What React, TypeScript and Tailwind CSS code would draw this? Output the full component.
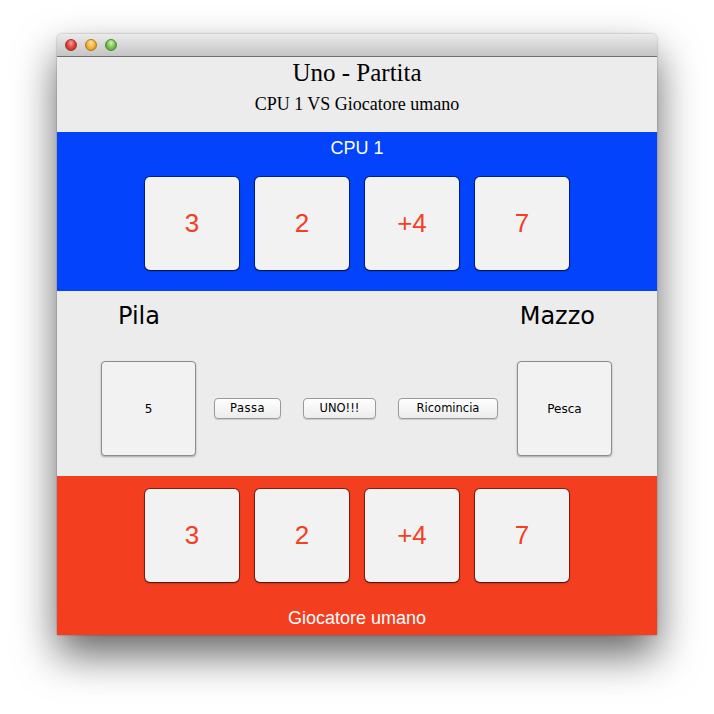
import React from "react";

const cards = ["3", "2", "+4", "7"];

export default function App() {
  return (
    <div className="w-[714px] h-[714px] bg-white pt-[34px] pl-[57px]">
      <div className="w-[600px] h-[601px] flex flex-col rounded-t-[5px] shadow-[0_20px_42px_rgba(0,0,0,0.6),0_0_2px_rgba(0,0,0,0.4)]">
        {/* title bar */}
        <div className="h-[23px] shrink-0 rounded-t-[5px] bg-gradient-to-b from-[#ebebeb] to-[#c4c4c4] border-b border-[#6e6e6e] flex items-center gap-[8px] pl-[8px]">
          <Light color="from-[#ff9a9a] via-[#e0443e] to-[#a8201a]" ring="border-[#a3302c]" />
          <Light color="from-[#ffe6a0] via-[#f5b43a] to-[#c27a0e]" ring="border-[#b07820]" />
          <Light color="from-[#d3f5b0] via-[#7cc356] to-[#3f8a22]" ring="border-[#4b8a30]" />
        </div>

        {/* header */}
        <div className="h-[75px] shrink-0 bg-[#ececec] flex flex-col items-center pt-[1px] font-['Liberation_Serif',serif] text-black">
          <div className="text-[25px] leading-[30px]">Uno - Partita</div>
          <div className="text-[18px] leading-[22px] mt-[5px]">CPU 1 VS Giocatore umano</div>
        </div>

        {/* CPU */}
        <div className="h-[159px] shrink-0 bg-[#0343fb] flex flex-col items-center font-['Liberation_Sans',sans-serif]">
          <div className="text-white text-[18px] leading-[21px] mt-[6px]">CPU 1</div>
          <div className="flex gap-[16px] mt-[18px]">
            {cards.map((c, i) => (
              <Card key={i} label={c} />
            ))}
          </div>
        </div>

        {/* table */}
        <div className="h-[185px] shrink-0 bg-[#ececec] flex flex-col font-['DejaVu_Sans',sans-serif] text-black">
          <div className="flex justify-between pl-[61px] pr-[62px] mt-[10px] text-[24px] leading-[30px]">
            <span>Pila</span>
            <span>Mazzo</span>
          </div>
          <div className="flex items-center pl-[44px] mt-[30px]">
            <BigButton label="5" />
            <SmallButton label="Passa" w="w-[67px]" cls="ml-[18px] tracking-[0.5px]" />
            <SmallButton label="UNO!!!" w="w-[73px]" cls="ml-[22px]" />
            <SmallButton label="Ricomincia" w="w-[100px]" cls="ml-[22px]" />
            <div className="ml-[19px]">
              <BigButton label="Pesca" />
            </div>
          </div>
        </div>

        {/* player */}
        <div className="h-[159px] shrink-0 bg-[#f33f20] flex flex-col items-center font-['Liberation_Sans',sans-serif]">
          <div className="flex gap-[16px] mt-[13px]">
            {cards.map((c, i) => (
              <Card key={i} label={c} />
            ))}
          </div>
          <div className="text-white text-[18px] leading-[21px] mt-[26px]">Giocatore umano</div>
        </div>
      </div>
    </div>
  );
}

function Light({ color, ring }: { color: string; ring: string }) {
  return (
    <div className={`w-[12px] h-[12px] rounded-full border bg-radial-[at_50%_30%] ${color} ${ring}`} />
  );
}

function Card({ label }: { label: string }) {
  return (
    <div className="w-[94px] h-[93px] rounded-[5px] bg-[#f2f2f2] shadow-[0_0_0_1px_rgba(0,0,0,0.45),0_1px_2px_rgba(0,0,0,0.5)] flex items-center justify-center text-[#f3401f] text-[26px]">
      {label}
    </div>
  );
}

function BigButton({ label }: { label: string }) {
  return (
    <div className="w-[95px] h-[95px] rounded-[4px] bg-[#f2f2f2] border border-[#8c8c8c] shadow-[0_1px_2px_rgba(0,0,0,0.3)] flex items-center justify-center text-[12px] text-black">
      {label}
    </div>
  );
}

function SmallButton({ label, w, cls }: { label: string; w: string; cls: string }) {
  return (
    <div className={`${w} ${cls} h-[21px] rounded-[4px] bg-gradient-to-b from-white to-[#ececec] border border-[#9a9a9a] shadow-[0_1px_1px_rgba(0,0,0,0.15)] flex items-center justify-center text-[11.5px] text-black`}>
      {label}
    </div>
  );
}
